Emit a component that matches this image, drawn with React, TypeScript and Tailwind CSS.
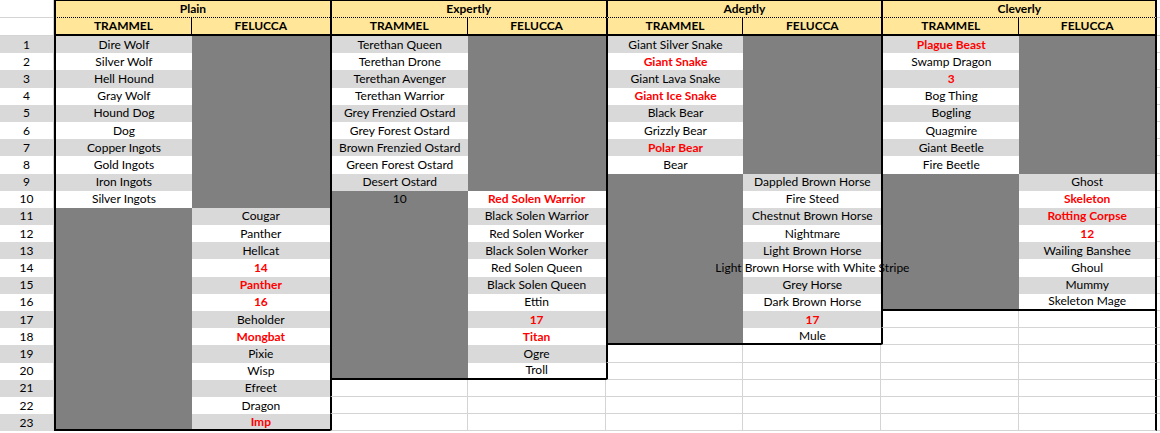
import React from "react";
import clsx from "clsx";

type Cell = { text?: string; red?: boolean; dark?: boolean; empty?: boolean };

const rep = (s: string, n: number) => Array.from({ length: n }, () => s);

// "#" dark fill, "#txt" dark fill with text, "*txt" red bold, "~" outside the table
const parse = (s: string): Cell => {
  if (s === "~") return { empty: true };
  if (s.startsWith("#")) return { dark: true, text: s.slice(1) || undefined };
  if (s.startsWith("*")) return { red: true, text: s.slice(1) };
  return { text: s };
};

const groups = [
  {
    name: "Plain",
    last: 23,
    trammel: [
      "Dire Wolf",
      "Silver Wolf",
      "Hell Hound",
      "Gray Wolf",
      "Hound Dog",
      "Dog",
      "Copper Ingots",
      "Gold Ingots",
      "Iron Ingots",
      "Silver Ingots",
      ...rep("#", 13),
    ],
    felucca: [
      ...rep("#", 10),
      "Cougar",
      "Panther",
      "Hellcat",
      "*14",
      "*Panther",
      "*16",
      "Beholder",
      "*Mongbat",
      "Pixie",
      "Wisp",
      "Efreet",
      "Dragon",
      "*Imp",
    ],
  },
  {
    name: "Expertly",
    last: 20,
    trammel: [
      "Terethan Queen",
      "Terethan Drone",
      "Terethan Avenger",
      "Terethan Warrior",
      "Grey Frenzied Ostard",
      "Grey Forest Ostard",
      "Brown Frenzied Ostard",
      "Green Forest Ostard",
      "Desert Ostard",
      "#10",
      ...rep("#", 10),
      ...rep("~", 3),
    ],
    felucca: [
      ...rep("#", 9),
      "*Red Solen Warrior",
      "Black Solen Warrior",
      "Red Solen Worker",
      "Black Solen Worker",
      "Red Solen Queen",
      "Black Solen Queen",
      "Ettin",
      "*17",
      "*Titan",
      "Ogre",
      "Troll",
      ...rep("~", 3),
    ],
  },
  {
    name: "Adeptly",
    last: 18,
    trammel: [
      "Giant Silver Snake",
      "*Giant Snake",
      "Giant Lava Snake",
      "*Giant Ice Snake",
      "Black Bear",
      "Grizzly Bear",
      "*Polar Bear",
      "Bear",
      ...rep("#", 10),
      ...rep("~", 5),
    ],
    felucca: [
      ...rep("#", 8),
      "Dappled Brown Horse",
      "Fire Steed",
      "Chestnut Brown Horse",
      "Nightmare",
      "Light Brown Horse",
      "Light Brown Horse with White Stripe",
      "Grey Horse",
      "Dark Brown Horse",
      "*17",
      "Mule",
      ...rep("~", 5),
    ],
  },
  {
    name: "Cleverly",
    last: 16,
    trammel: [
      "*Plague Beast",
      "Swamp Dragon",
      "*3",
      "Bog Thing",
      "Bogling",
      "Quagmire",
      "Giant Beetle",
      "Fire Beetle",
      ...rep("#", 8),
      ...rep("~", 7),
    ],
    felucca: [
      ...rep("#", 8),
      "Ghost",
      "*Skeleton",
      "*Rotting Corpse",
      "*12",
      "Wailing Banshee",
      "Ghoul",
      "Mummy",
      "Skeleton Mage",
      ...rep("~", 7),
    ],
  },
];

const rows = Array.from({ length: 23 }, (_, i) => i + 1);
const grid = "border-r-[#d4d4d4] border-b-[#d4d4d4]";

function DataCell({
  cell,
  row,
  leftEdge,
  rightEdge,
  bottomEdge,
}: {
  cell: Cell;
  row: number;
  leftEdge: boolean;
  rightEdge: boolean;
  bottomEdge: boolean;
}) {
  return (
    <div
      className={clsx(
        "flex items-center justify-center whitespace-nowrap",
        cell.empty
          ? `border-r border-b bg-white ${grid}`
          : cell.dark
            ? "bg-[#808080]"
            : row % 2 === 1
              ? "bg-[#d9d9d9]"
              : "bg-white",
        leftEdge && "border-l-2 border-l-black",
        rightEdge && "border-r-2 border-r-black",
        bottomEdge && "border-b-2 border-b-black",
      )}
    >
      {cell.text && (
        <span className={clsx("relative z-10", cell.red ? "font-bold text-[#ff0000]" : "text-black")}>
          {cell.text}
        </span>
      )}
    </div>
  );
}

export default function App() {
  return (
    <div className="grid h-[433px] w-[1160px] grid-cols-[54px_repeat(8,137.9px)_1fr] grid-rows-[18px_18px_repeat(23,17.2px)_1fr] overflow-hidden bg-white font-['Lato','Open_Sans',sans-serif] text-[12px] leading-none text-black">
      {/* header row 1: group names */}
      <div className={`border-r border-b ${grid}`} />
      {groups.map((g, gi) => (
        <div
          key={g.name}
          className={clsx(
            "col-span-2 flex items-center justify-center border-t border-b border-l-2 border-black bg-[#ffe699] font-bold [border-bottom-style:dotted]",
            gi === groups.length - 1 && "border-r-2",
          )}
        >
          {g.name}
        </div>
      ))}
      <div className={`border-b ${grid}`} />

      {/* header row 2: shards */}
      <div className={`border-r border-b ${grid}`} />
      {groups.map((g, gi) => (
        <React.Fragment key={`h${g.name}`}>
          <div className="flex items-center justify-center border-r border-b-2 border-l-2 border-black bg-[#ffe699] font-bold">
            TRAMMEL
          </div>
          <div
            className={clsx(
              "flex items-center justify-center border-b-2 border-black bg-[#ffe699] font-bold",
              gi === groups.length - 1 && "border-r-2",
            )}
          >
            FELUCCA
          </div>
        </React.Fragment>
      ))}
      <div className={`border-b ${grid}`} />

      {/* body */}
      {rows.map((r) => (
        <React.Fragment key={r}>
          <div
            className={clsx(
              "flex items-center justify-center border-r border-r-[#d4d4d4]",
              r % 2 === 1 ? "bg-[#d9d9d9]" : "bg-white",
            )}
          >
            {r}
          </div>
          {groups.map((g, gi) => {
            const inside = r <= g.last;
            const prevInside = gi > 0 && r <= groups[gi - 1].last;
            const lastGroup = gi === groups.length - 1;
            return (
              <React.Fragment key={g.name}>
                <DataCell
                  cell={parse(g.trammel[r - 1])}
                  row={r}
                  leftEdge={inside || prevInside}
                  rightEdge={false}
                  bottomEdge={r === g.last}
                />
                <DataCell
                  cell={parse(g.felucca[r - 1])}
                  row={r}
                  leftEdge={false}
                  rightEdge={lastGroup}
                  bottomEdge={r === g.last}
                />
              </React.Fragment>
            );
          })}
          <div className={`border-b ${grid}`} />
        </React.Fragment>
      ))}
    </div>
  );
}
